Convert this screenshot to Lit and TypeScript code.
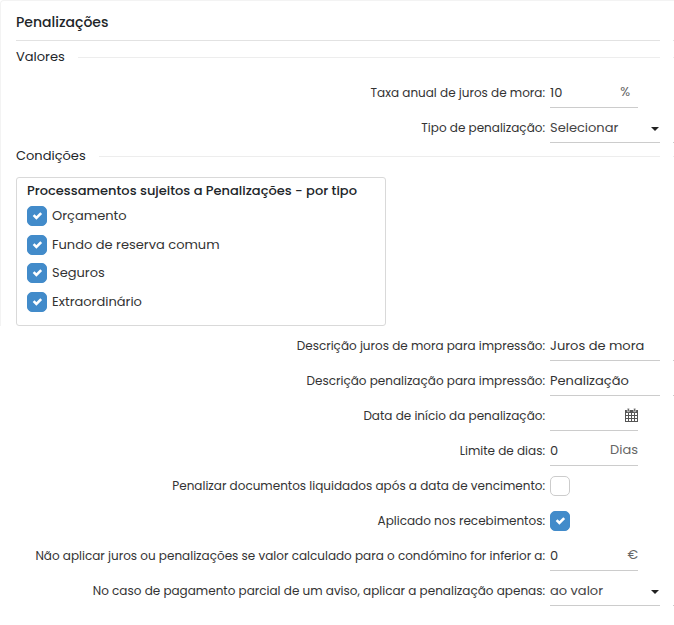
import { LitElement, html, css, svg, nothing, TemplateResult } from "lit";
import { customElement } from "lit/decorators.js";
import { classMap } from "lit/directives/class-map.js";

interface Field {
  id: string;
  label: string;
  kind: "text" | "select" | "date" | "check";
  value?: string;
  unit?: string;
  short?: boolean;
  inset?: boolean;
  checked?: boolean;
}

const VALUE_FIELDS: Field[] = [
  { id: "taxa", label: "Taxa anual de juros de mora:", kind: "text", value: "10", unit: "%", short: true, inset: true },
  { id: "tipo", label: "Tipo de penalização:", kind: "select", value: "Selecionar" },
];

const TYPES = ["Orçamento", "Fundo de reserva comum", "Seguros", "Extraordinário"];

const CONDITION_FIELDS: Field[] = [
  { id: "desc-juros", label: "Descrição juros de mora para impressão:", kind: "text", value: "Juros de mora" },
  { id: "desc-pen", label: "Descrição penalização para impressão:", kind: "text", value: "Penalização" },
  { id: "data", label: "Data de início da penalização:", kind: "date", value: "", short: true },
  { id: "limite", label: "Limite de dias:", kind: "text", value: "0", unit: "Dias", short: true },
  { id: "liquidados", label: "Penalizar documentos liquidados após a data de vencimento:", kind: "check", checked: false },
  { id: "recebimentos", label: "Aplicado nos recebimentos:", kind: "check", checked: true },
  { id: "minimo", label: "Não aplicar juros ou penalizações se valor calculado para o condómino for inferior a:", kind: "text", value: "0", unit: "€", short: true },
  { id: "parcial", label: "No caso de pagamento parcial de um aviso, aplicar a penalização apenas:", kind: "select", value: "ao valor" },
];

const calendarIcon = svg`<svg class="calendar" viewBox="0 0 13 14" aria-hidden="true">
  <path fill="#555" fill-rule="evenodd" d="M0 2h13v12H0zM1 5v2h2V5zM4 5v2h2V5zM7 5v2h2V5zM10 5v2h2V5zM1 8v2h2V8zM4 8v2h2V8zM7 8v2h2V8zM10 8v2h2V8zM1 11v2h2v-2zM4 11v2h2v-2zM7 11v2h2v-2zM10 11v2h2v-2z"/>
  <path fill="#555" stroke="#fff" stroke-width=".6" d="M2.3.3h2v3.4h-2zM8.7.3h2v3.4h-2z"/>
</svg>`;

const tickIcon = svg`<svg class="tick" viewBox="0 0 20 20" aria-hidden="true">
  <path fill="none" stroke="#fff" stroke-width="2.6" d="M6.6 9.2l2.8 2.8 4.8-4.9"/>
</svg>`;

const caretIcon = svg`<svg class="caret" viewBox="0 0 8 4" aria-hidden="true">
  <path fill="#222" d="M0 0h8L4 4z"/>
</svg>`;

@customElement("app-root")
export class AppRoot extends LitElement {
  static styles = css`
    :host {
      display: block;
      background: #fff;
      color: #333;
      font: 400 13px/20px Poppins, Inter, sans-serif;
    }
    * {
      box-sizing: border-box;
    }
    .panel {
      border-top: 1px solid #f3f3f3;
      border-left: 1px solid #f3f3f3;
      border-top-left-radius: 4px;
      padding-left: 15px;
    }
    .more {
      padding-left: 10px;
    }
    .line {
      display: flex;
      gap: 13px;
    }
    .line::after {
      content: "";
      flex: none;
      width: 1px;
    }
    .heading {
      height: 40px;
      margin-bottom: 3px;
      align-items: stretch;
    }
    .title {
      flex: 1;
      margin: 0;
      padding-top: 11px;
      border-bottom: 1px solid #e2e2e2;
      color: #212529;
      font-size: 14px;
      font-weight: 500;
      line-height: 20px;
    }
    .heading::after {
      border-bottom: 1px solid #e2e2e2;
    }
    .legend {
      height: 26px;
      margin: 0 0 3px;
      align-items: center;
      font-size: 13px;
      font-weight: 400;
      color: #212529;
    }
    .legend.spaced {
      margin-bottom: 8px;
    }
    .rule {
      flex: 1;
    }
    .rule,
    .legend::after {
      border-top: 1px solid #ededed;
    }
    .box {
      display: flex;
      flex-direction: column;
      max-width: 370px;
      height: 149px;
      padding: 3px 10px 13px;
      border: 1px solid #d9d9d9;
      border-radius: 3px;
    }
    .box-title {
      margin: 0 0 5px;
      color: #212529;
      font-size: 13px;
      font-weight: 500;
      line-height: 20px;
    }
    .types {
      display: flex;
      flex: 1;
      flex-direction: column;
      justify-content: space-between;
    }
    .type {
      display: flex;
      align-items: center;
      gap: 5px;
    }
    .row {
      height: 35px;
    }
    .row.lined::after {
      border-bottom: 1px solid #ccc;
    }
    .field {
      display: flex;
      flex: 1;
      min-width: 0;
      gap: 5px;
    }
    .name {
      flex: 1;
      padding-top: 10px;
      font-size: 12px;
      text-align: right;
      white-space: nowrap;
    }
    .slot {
      display: flex;
      flex: none;
      align-items: center;
      width: 110px;
    }
    .control {
      display: flex;
      flex: none;
      align-items: center;
      width: 110px;
      height: 35px;
      border-bottom: 1px solid #ccc;
    }
    .control.short {
      width: 88px;
    }
    .input {
      flex: 1;
      min-width: 0;
      height: 20px;
      margin-top: 6px;
      padding: 0;
      border: 0;
      outline: 0;
      background: none;
      color: #333;
      font: inherit;
    }
    .select {
      appearance: none;
      color: #444;
    }
    .unit {
      margin-top: 4px;
      color: #666;
    }
    .unit.inset {
      padding-right: 8px;
    }
    .picker {
      display: flex;
      padding: 0;
      border: 0;
      background: none;
    }
    .calendar {
      display: block;
      width: 13px;
      height: 14px;
      margin-top: 3px;
    }
    .caret {
      width: 8px;
      height: 4px;
      margin: 8px 1px 0 0;
      pointer-events: none;
    }
    .check {
      display: grid;
      flex: none;
      width: 20px;
      height: 20px;
    }
    .row .check {
      margin-top: 5px;
    }
    .checkbox {
      grid-area: 1 / 1;
      appearance: none;
      width: 20px;
      height: 20px;
      margin: 0;
      border: 1px solid #ccc;
      border-radius: 5px;
      background: #fff;
    }
    .checkbox:checked {
      border-color: #428bca;
      background: #428bca;
    }
    .tick {
      grid-area: 1 / 1;
      z-index: 1;
      width: 20px;
      height: 20px;
      pointer-events: none;
    }
    .checkbox:not(:checked) + .tick {
      visibility: hidden;
    }
  `;

  private checkbox(id: string, checked: boolean): TemplateResult {
    return html`<span class="check">
      <input class="checkbox" type="checkbox" id=${id} .checked=${checked} />${tickIcon}
    </span>`;
  }

  private control(f: Field): TemplateResult {
    if (f.kind === "check") return this.checkbox(f.id, !!f.checked);
    const main =
      f.kind === "select"
        ? html`<select class="input select" id=${f.id}><option>${f.value}</option></select>${caretIcon}`
        : html`<input class="input" type="text" id=${f.id} .value=${f.value ?? ""} />`;
    return html`<span class=${classMap({ control: true, short: !!f.short })}>
      ${main}
      ${f.unit ? html`<span class=${classMap({ unit: true, inset: !!f.inset })}>${f.unit}</span>` : nothing}
      ${f.kind === "date" ? html`<button class="picker" type="button" aria-label="Calendário">${calendarIcon}</button>` : nothing}
    </span>`;
  }

  private row(f: Field): TemplateResult {
    const lined = f.kind !== "check" && !f.short;
    return html`<div class=${classMap({ line: true, row: true, lined })}>
      <div class="field">
        <label class="name" for=${f.id}>${f.label}</label>
        <span class="slot">${this.control(f)}</span>
      </div>
    </div>`;
  }

  render() {
    return html`
      <section class="panel">
        <header class="line heading"><h1 class="title">Penalizações</h1></header>
        <h2 class="line legend">Valores<span class="rule"></span></h2>
        ${VALUE_FIELDS.map((f) => this.row(f))}
        <h2 class="line legend spaced">Condições<span class="rule"></span></h2>
        <div class="box">
          <h3 class="box-title">Processamentos sujeitos a Penalizações - por tipo</h3>
          <div class="types">
            ${TYPES.map(
              (t, i) => html`<div class="type">
                ${this.checkbox(`type-${i}`, true)}
                <label for=${`type-${i}`}>${t}</label>
              </div>`
            )}
          </div>
        </div>
      </section>
      <section class="more">${CONDITION_FIELDS.map((f) => this.row(f))}</section>
    `;
  }
}
